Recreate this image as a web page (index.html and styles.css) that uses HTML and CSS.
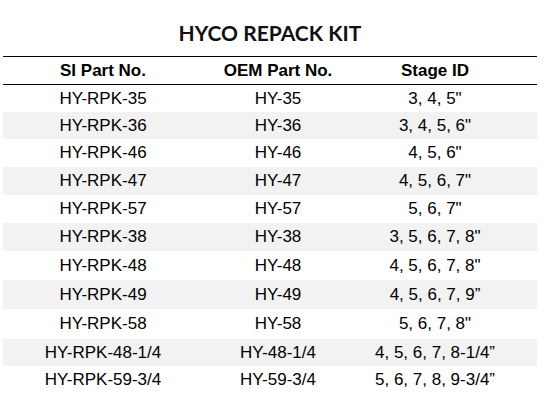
FILE: index.html
```html
<!DOCTYPE html>
<html>
<head>
<meta charset="utf-8">
<link rel="stylesheet" href="styles.css">
</head>
<body>
<div class="page">
  <h1 class="title">HYCO REPACK KIT</h1>
  <table class="kit">
    <colgroup>
      <col class="c1"><col class="c2"><col class="c3">
    </colgroup>
    <thead>
      <tr><th>SI Part No.</th><th>OEM Part No.</th><th class="last">Stage ID</th></tr>
    </thead>
    <tbody>
      <tr class="short"><td>HY-RPK-35</td><td>HY-35</td><td class="last">3, 4, 5"</td></tr>
      <tr class="short"><td>HY-RPK-36</td><td>HY-36</td><td class="last">3, 4, 5, 6"</td></tr>
      <tr><td>HY-RPK-46</td><td>HY-46</td><td class="last">4, 5, 6"</td></tr>
      <tr><td>HY-RPK-47</td><td>HY-47</td><td class="last">4, 5, 6, 7"</td></tr>
      <tr><td>HY-RPK-57</td><td>HY-57</td><td class="last">5, 6, 7"</td></tr>
      <tr><td>HY-RPK-38</td><td>HY-38</td><td class="last">3, 5, 6, 7, 8"</td></tr>
      <tr class="tall"><td>HY-RPK-48</td><td>HY-48</td><td class="last">4, 5, 6, 7, 8"</td></tr>
      <tr class="tall"><td>HY-RPK-49</td><td>HY-49</td><td class="last">4, 5, 6, 7, 9”</td></tr>
      <tr class="taller"><td>HY-RPK-58</td><td>HY-58</td><td class="last">5, 6, 7, 8"</td></tr>
      <tr class="short"><td>HY-RPK-48-1/4</td><td>HY-48-1/4</td><td class="last">4, 5, 6, 7, 8-1/4”</td></tr>
      <tr><td>HY-RPK-59-3/4</td><td>HY-59-3/4</td><td class="last">5, 6, 7, 8, 9-3/4”</td></tr>
    </tbody>
  </table>
</div>
</body>
</html>
```
FILE: styles.css
```css
html, body {
  margin: 0;
  padding: 0;
  background: #ffffff;
}

.page {
  width: 545px;
  padding: 0 0 0 3px;
  box-sizing: border-box;
}

.title {
  margin: 0;
  padding-top: 20px;
  height: 56px;
  box-sizing: border-box;
  width: 534px;
  text-align: center;
  font-family: Lato, "Open Sans", sans-serif;
  font-weight: 700;
  font-size: 21px;
  line-height: 26px;
  color: #111111;
}

.kit {
  width: 534px;
  border-collapse: collapse;
  table-layout: fixed;
  font-family: "Liberation Sans", Arial, sans-serif;
  font-size: 17px;
  color: #000000;
}

.c1 { width: 200px; }
.c2 { width: 150px; }
.c3 { width: 184px; }

.kit thead tr {
  border-top: 1px solid #000000;
  border-bottom: 1px solid #000000;
}

.kit th {
  height: 27px;
  padding: 0;
  font-weight: 700;
  text-align: center;
  vertical-align: middle;
}

.kit td {
  height: 28px;
  padding: 0;
  text-align: center;
  vertical-align: middle;
}

.kit .short td { height: 27px; }
.kit .tall td { height: 29px; }
.kit .taller td { height: 30px; }

.kit .last {
  padding-right: 20px;
}

.kit tbody tr:nth-child(even) {
  background: #f2f2f2;
}
```
